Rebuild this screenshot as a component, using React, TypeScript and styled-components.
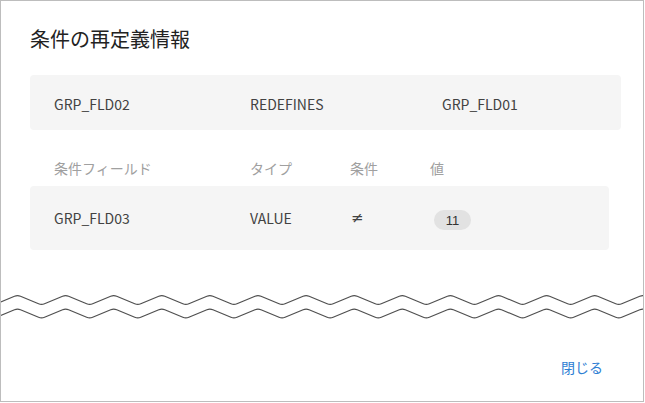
import React from "react";
import styled, { createGlobalStyle } from "styled-components";

const Global = createGlobalStyle`
  html, body { margin: 0; padding: 0; background: #fff; }
  body { font-family: "Noto Sans CJK JP", "Noto Sans", sans-serif; }
`;

const Frame = styled.div`
  box-sizing: border-box;
  width: 644px;
  height: 402px;
  border: 1px solid #bdbdbd;
  display: flex;
  flex-direction: column;
  background: #fff;
  overflow: hidden;
`;

const Content = styled.div`
  padding: 0 22px 0 29px;
  display: flex;
  flex-direction: column;
`;

const Title = styled.h2`
  margin: 24px 0 0;
  font-size: 20px;
  line-height: 28px;
  font-weight: 400;
  color: #222;
`;

const Panel = styled.div<{ $h: number; $right: number }>`
  box-sizing: border-box;
  height: ${(p) => p.$h}px;
  margin-right: ${(p) => p.$right}px;
  background: #f5f5f5;
  border-radius: 4px;
  padding-left: 24px;
  display: grid;
  align-items: center;
`;

const SummaryPanel = styled(Panel)`
  margin-top: 22px;
  padding-top: 2px;
  grid-template-columns: 196px 192px 1fr;
`;

const Cols = `grid-template-columns: 196px 100px 80px 1fr;`;

const HeaderRow = styled.div`
  display: grid;
  ${Cols}
  padding-left: 24px;
  margin: 29px 0 9px;
  height: 18px;
  align-items: center;
`;

const HeaderCell = styled.div`
  font-size: 14px;
  line-height: 18px;
  color: #a0a0a0;
`;

const DataPanel = styled(Panel)`
  ${Cols}
`;

const Cell = styled.div`
  font-size: 14px;
  line-height: 20px;
  color: #424242;
`;

const Op = styled.div`
  font-family: "DejaVu Sans", sans-serif;
  font-size: 15px;
  color: #424242;
  padding-left: 1px;
`;

const Badge = styled.span`
  display: inline-flex;
  align-items: center;
  justify-content: center;
  width: 37px;
  height: 20px;
  margin-left: 4px;
  border-radius: 10px;
  background: #e2e2e2;
  font-family: "Liberation Sans", Arial, sans-serif;
  font-size: 13px;
  color: #333;
`;

const Zig = styled.svg`
  display: block;
  margin-top: 39px;
  width: 642px;
  height: 40px;
`;

const Footer = styled.div`
  display: flex;
  justify-content: flex-end;
  padding: 28px 40px 0 0;
`;

const CloseButton = styled.button`
  border: 0;
  background: none;
  padding: 0;
  font-family: "Noto Sans CJK JP", sans-serif;
  font-size: 14px;
  line-height: 20px;
  color: #2f80d3;
  cursor: pointer;
`;

function zigPath(offsetY: number) {
  const period = 48.1;
  const first = 16.5;
  const half = period / 2;
  const r = 3;
  let d = "";
  for (let i = -1; first + i * period < 700; i++) {
    const px = first + i * period;
    const tx = px - half;
    const slopeY = 10 / half;
    if (d === "") d = `M${(tx - r).toFixed(2)},${(offsetY + 10 - r * slopeY).toFixed(2)}`;
    // trough with rounded corner
    d += ` Q${tx.toFixed(2)},${(offsetY + 10).toFixed(2)} ${(tx + r).toFixed(2)},${(offsetY + 10 - r * slopeY).toFixed(2)}`;
    d += ` L${(px - r).toFixed(2)},${(offsetY + r * slopeY).toFixed(2)}`;
    d += ` Q${px.toFixed(2)},${offsetY.toFixed(2)} ${(px + r).toFixed(2)},${(offsetY + r * slopeY).toFixed(2)}`;
    d += ` L${(px + half - r).toFixed(2)},${(offsetY + 10 - r * slopeY).toFixed(2)}`;
  }
  return d;
}

export default function App() {
  return (
    <>
      <Global />
      <Frame>
        <Content>
          <Title>条件の再定義情報</Title>
          <SummaryPanel $h={55} $right={0}>
            <Cell>GRP_FLD02</Cell>
            <Cell>REDEFINES</Cell>
            <Cell>GRP_FLD01</Cell>
          </SummaryPanel>
          <HeaderRow>
            <HeaderCell>条件フィールド</HeaderCell>
            <HeaderCell>タイプ</HeaderCell>
            <HeaderCell>条件</HeaderCell>
            <HeaderCell>値</HeaderCell>
          </HeaderRow>
          <DataPanel $h={64} $right={12}>
            <Cell>GRP_FLD03</Cell>
            <Cell>VALUE</Cell>
            <Op>≠</Op>
            <div>
              <Badge>11</Badge>
            </div>
          </DataPanel>
        </Content>
        <Zig viewBox="0 0 642 40" aria-hidden="true">
          <path d={zigPath(6)} fill="none" stroke="#505050" strokeWidth="1.2" strokeLinejoin="round" />
          <path d={zigPath(19.5)} fill="none" stroke="#505050" strokeWidth="1.2" strokeLinejoin="round" />
        </Zig>
        <Footer>
          <CloseButton>閉じる</CloseButton>
        </Footer>
      </Frame>
    </>
  );
}
